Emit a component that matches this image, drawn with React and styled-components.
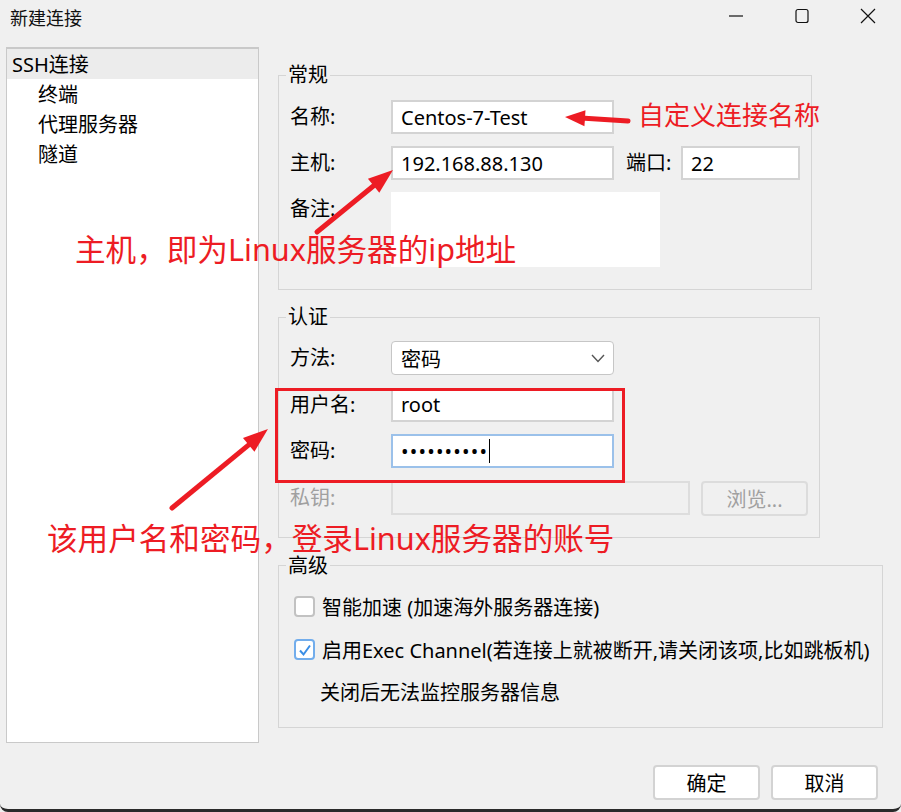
import styled, { createGlobalStyle } from "styled-components";

const GlobalStyle = createGlobalStyle`
  body {
    margin: 0;
    background: #f0f0f0;
    font-family: "Noto Sans", "Noto Sans CJK SC", sans-serif;
  }
`;

const RED = "#ed1c24";

export default function App() {
  return (
    <Window>
      <GlobalStyle />
      <TitleBar>
        <Title>新建连接</Title>
        <Controls>
          <CtrlBtn>
            <svg width="16" height="16" viewBox="0 0 16 16">
              <line x1="1" y1="8" x2="15" y2="8" stroke="#111" strokeWidth="1.2" />
            </svg>
          </CtrlBtn>
          <CtrlBtn>
            <svg width="16" height="16" viewBox="0 0 16 16">
              <rect x="2" y="1.5" width="12" height="13" rx="2" fill="none" stroke="#111" strokeWidth="1.2" />
            </svg>
          </CtrlBtn>
          <CtrlBtn>
            <svg width="16" height="16" viewBox="0 0 16 16">
              <path d="M1 1 L15 15 M15 1 L1 15" stroke="#111" strokeWidth="1.2" />
            </svg>
          </CtrlBtn>
        </Controls>
      </TitleBar>

      <Body>
        <Sidebar>
          <NavItem $active>SSH连接</NavItem>
          <NavItem $child>终端</NavItem>
          <NavItem $child>代理服务器</NavItem>
          <NavItem $child>隧道</NavItem>
        </Sidebar>

        <Main>
          <Group $w={534} $mt={16} $pt={13} $pb={22}>
            <Legend>常规</Legend>
            <Rows>
              <Row>
                <Label>名称:</Label>
                <Field>Centos-7-Test</Field>
              </Row>
              <Row>
                <Label>主机:</Label>
                <Field>192.168.88.130</Field>
                <PortLabel>端口:</PortLabel>
                <Field $w={119}>22</Field>
              </Row>
              <Row $top>
                <Label>备注:</Label>
                <Field $w={269} $h={75} $bare />
              </Row>
            </Rows>
          </Group>

          <Group $w={542} $mt={15} $pt={12} $pb={21}>
            <Legend>认证</Legend>
            <Rows $gap={12.5}>
              <Row>
                <Label>方法:</Label>
                <Select>
                  <span>密码</span>
                  <svg width="14" height="9" viewBox="0 0 14 9">
                    <polyline points="1,1 7,7.5 13,1" fill="none" stroke="#555" strokeWidth="1.4" />
                  </svg>
                </Select>
              </Row>
              <Row>
                <Label>用户名:</Label>
                <Field>root</Field>
              </Row>
              <Row>
                <Label>密码:</Label>
                <Field $focused>
                  <Dots>••••••••••</Dots>
                  <Caret />
                </Field>
              </Row>
              <Row>
                <Label $disabled>私钥:</Label>
                <Field $w={299} $disabled />
                <Button $disabled $ml={11}>浏览...</Button>
              </Row>
            </Rows>
          </Group>

          <Group $w={605} $mt={16} $pt={14} $pb={19}>
            <Legend>高级</Legend>
            <Rows $gap={13}>
              <CheckRow>
                <Check />
                <span>智能加速 (加速海外服务器连接)</span>
              </CheckRow>
              <CheckRow>
                <Check $checked>
                  <svg width="16" height="16" viewBox="0 0 16 16">
                    <polyline points="3,8.5 6.5,12.5 13,3.5" fill="none" stroke="#3a8ee6" strokeWidth="2" />
                  </svg>
                </Check>
                <span>启用Exec Channel(若连接上就被断开,请关闭该项,比如跳板机)</span>
              </CheckRow>
              <Note>关闭后无法监控服务器信息</Note>
            </Rows>
          </Group>

          <ButtonRow>
            <Button>确定</Button>
            <Button>取消</Button>
          </ButtonRow>
        </Main>
      </Body>

      <Overlay>
        <svg width="901" height="812" viewBox="0 0 901 812">
          <Arrow x1={628} y1={121} x2={565} y2={117} len={20} w={8} />
          <Arrow x1={317} y1={232} x2={393} y2={170} len={25} w={9} />
          <Arrow x1={172} y1={508} x2={268} y2={429} len={25} w={9} />
        </svg>
        <Mark $x={638} $y={102} $size={26}>自定义连接名称</Mark>
        <Mark $x={75} $y={234} $size={30.6}>主机，即为Linux服务器的ip地址</Mark>
        <Mark $x={47} $y={523} $size={30.6}>该用户名和密码，登录Linux服务器的账号</Mark>
        <RedBox />
      </Overlay>
    </Window>
  );
}

function Arrow({ x1, y1, x2, y2, len, w }) {
  const a = Math.atan2(y2 - y1, x2 - x1);
  const c = Math.cos(a);
  const s = Math.sin(a);
  const bx = x2 - len * c;
  const by = y2 - len * s;
  const head = [
    [x2, y2],
    [bx - s * w, by + c * w],
    [bx + s * w, by - c * w],
  ];
  return (
    <g>
      <line x1={x1} y1={y1} x2={bx + 4 * c} y2={by + 4 * s} stroke={RED} strokeWidth="5" strokeLinecap="round" />
      <polygon points={head.map((p) => p.join(",")).join(" ")} fill={RED} />
    </g>
  );
}

const Window = styled.div`
  position: relative;
  width: 901px;
  height: 812px;
  box-sizing: border-box;
  background: #f0f0f0;
  border-bottom: 3px solid #2a2a2a;
  border-radius: 0 0 8px 8px;
  overflow: hidden;
  color: #000;
  font-size: 20px;
`;

const TitleBar = styled.div`
  display: flex;
  justify-content: space-between;
  height: 36px;
`;

const Title = styled.div`
  padding: 7px 0 0 10px;
  font-size: 18px;
  line-height: 22px;
  color: #111;
`;

const Controls = styled.div`
  display: flex;
`;

const CtrlBtn = styled.div`
  width: 66px;
  height: 32px;
  display: flex;
  align-items: center;
  justify-content: center;
`;

const Body = styled.div`
  display: flex;
  align-items: flex-start;
  gap: 19px;
  padding: 11px 0 0 6px;
`;

const Sidebar = styled.div`
  box-sizing: border-box;
  width: 253px;
  height: 696px;
  background: #fff;
  border: 1px solid #c9c9c9;
  border-top-width: 2px;
`;

const NavItem = styled.div`
  height: 28px;
  padding-top: 2px;
  line-height: 28px;
  padding-left: ${(p) => (p.$child ? 31 : 5)}px;
  background: ${(p) => (p.$active ? "#ececec" : "transparent")};
`;

const Main = styled.div`
  width: 600px;
  display: flex;
  flex-direction: column;
`;

const Group = styled.fieldset`
  box-sizing: border-box;
  width: ${(p) => p.$w}px;
  margin: ${(p) => p.$mt}px 0 0;
  padding: ${(p) => p.$pt}px 11px ${(p) => p.$pb}px;
  border: 1px solid #d5d5d5;
  min-width: 0;
`;

const Legend = styled.legend`
  padding: 0 2px;
  margin-left: -4px;
  font-size: 20px;
  line-height: 24px;
`;

const Rows = styled.div`
  display: flex;
  flex-direction: column;
  gap: ${(p) => p.$gap || 12}px;
`;

const Row = styled.div`
  display: flex;
  align-items: ${(p) => (p.$top ? "flex-start" : "center")};
`;

const Label = styled.div`
  width: 101px;
  line-height: 34px;
  color: ${(p) => (p.$disabled ? "#a0a0a0" : "#000")};
`;

const PortLabel = styled(Label)`
  width: 55px;
  margin-left: 12px;
`;

const Field = styled.div`
  box-sizing: border-box;
  width: ${(p) => p.$w || 223}px;
  height: ${(p) => p.$h || 34}px;
  padding: 0 8px;
  display: flex;
  align-items: center;
  background: ${(p) => (p.$disabled ? "transparent" : "#fff")};
  border: 2px solid
    ${(p) =>
      p.$focused ? "#9bc1ea" : p.$disabled ? "#dddddd" : p.$bare ? "#fff" : "#d3d3d3"};
`;

const Dots = styled.span`
  letter-spacing: 1.2px;
  font-size: 20px;
`;

const Caret = styled.span`
  width: 1px;
  height: 24px;
  margin-left: 1px;
  background: #000;
`;

const Select = styled.div`
  box-sizing: border-box;
  width: 223px;
  height: 34px;
  padding: 0 8px 0 9px;
  display: flex;
  align-items: center;
  justify-content: space-between;
  background: #fff;
  border: 1px solid #c6c6c6;
  border-radius: 4px;
`;

const Button = styled.div`
  box-sizing: border-box;
  width: 107px;
  height: 35px;
  margin-left: ${(p) => p.$ml || 0}px;
  display: flex;
  align-items: center;
  justify-content: center;
  background: ${(p) => (p.$disabled ? "transparent" : "#fff")};
  color: ${(p) => (p.$disabled ? "#a0a0a0" : "#000")};
  border: 2px solid ${(p) => (p.$disabled ? "#dcdcdc" : "#d3d3d3")};
  border-radius: 4px;
`;

const CheckRow = styled.div`
  display: flex;
  align-items: center;
  gap: 7px;
  height: 30px;
  padding-left: 4px;
`;

const Check = styled.div`
  box-sizing: border-box;
  width: 21px;
  height: 21px;
  display: flex;
  align-items: center;
  justify-content: center;
  background: #fff;
  border: 2px solid ${(p) => (p.$checked ? "#72adec" : "#c2c2c2")};
  border-radius: 4px;
`;

const Note = styled.div`
  height: 30px;
  line-height: 30px;
  padding-left: 30px;
`;

const ButtonRow = styled.div`
  display: flex;
  justify-content: flex-end;
  gap: 11px;
  margin-top: 37px;
`;

const Overlay = styled.div`
  position: absolute;
  inset: 0;
  pointer-events: none;
  svg {
    position: absolute;
    left: 0;
    top: 0;
  }
`;

const Mark = styled.div`
  position: absolute;
  left: ${(p) => p.$x}px;
  top: ${(p) => p.$y}px;
  font-size: ${(p) => p.$size}px;
  line-height: ${(p) => p.$size}px;
  color: ${RED};
  white-space: nowrap;
`;

const RedBox = styled.div`
  position: absolute;
  left: 275px;
  top: 388px;
  width: 350px;
  height: 95px;
  box-sizing: border-box;
  border: 3px solid ${RED};
`;
